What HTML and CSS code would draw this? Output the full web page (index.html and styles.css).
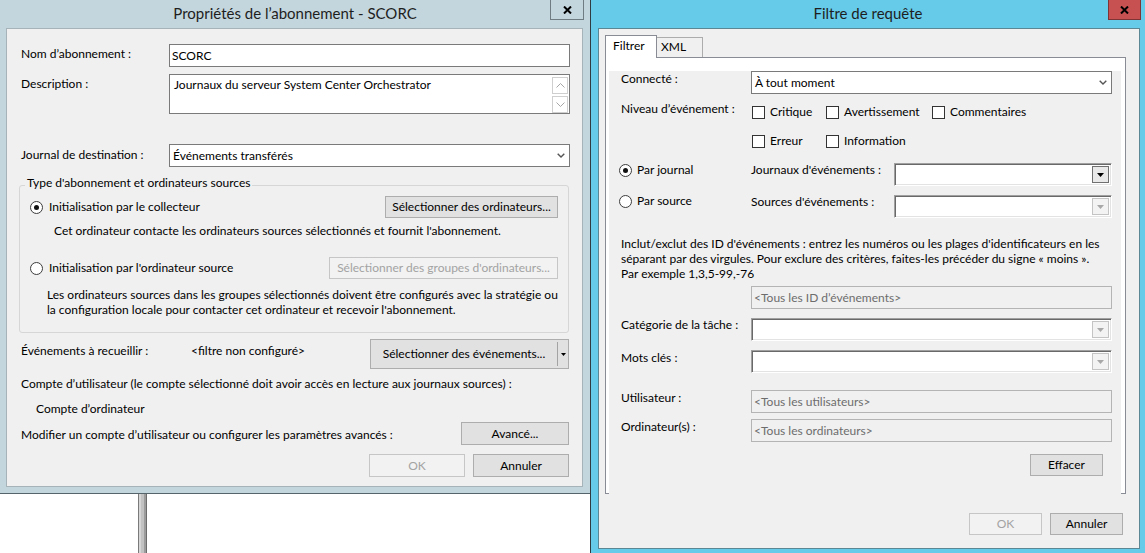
FILE: index.html
```html
<!DOCTYPE html>
<html lang="fr">
<head>
    <meta charset="UTF-8">
    <meta name="viewport" content="width=device-width, initial-scale=1.0">
    <title>Propriétés de l’abonnement - SCORC</title>
    <link rel="stylesheet" href="styles.css">
</head>
<body>
    <div class="desktop">
        <div class="left-side">
            <div class="window sub-window">
                <div class="titlebar">
                    <div class="title">Propriétés de l’abonnement - SCORC</div>
                    <div class="close-btn">
                        <svg width="9" height="8" viewBox="0 0 9 8"><path d="M1 0.5 L8 7.5 M8 0.5 L1 7.5" stroke="#000" stroke-width="2"/></svg>
                    </div>
                </div>
                <div class="client sub-client">
                    <div class="form-row row-name">
                        <div class="lbl">Nom d’abonnement :</div>
                        <div class="textbox">SCORC</div>
                    </div>
                    <div class="form-row row-desc">
                        <div class="lbl">Description :</div>
                        <div class="textbox textarea">
                            <span class="textarea-text">Journaux du serveur System Center Orchestrator</span>
                            <div class="scroll-btns">
                                <span class="scroll-btn"><svg width="9" height="5" viewBox="0 0 9 5"><path d="M0.5 4.5 L4.5 0.5 L8.5 4.5" fill="none" stroke="#a6a6a6"/></svg></span>
                                <span class="scroll-btn"><svg width="9" height="5" viewBox="0 0 9 5"><path d="M0.5 0.5 L4.5 4.5 L8.5 0.5" fill="none" stroke="#a6a6a6"/></svg></span>
                            </div>
                        </div>
                    </div>
                    <div class="form-row row-dest">
                        <div class="lbl">Journal de destination :</div>
                        <div class="select">
                            <span>Événements transférés</span>
                            <svg width="8" height="5" viewBox="0 0 8 5"><path d="M0.7 0.7 L4 4 L7.3 0.7" fill="none" stroke="#555" stroke-width="1.4"/></svg>
                        </div>
                    </div>

                    <fieldset class="group">
                        <legend>Type d'abonnement et ordinateurs sources</legend>
                        <div class="group-line line-a">
                            <span class="radio-item"><span class="radio checked"></span>Initialisation par le collecteur</span>
                            <button class="btn btn-computers">Sélectionner des ordinateurs...</button>
                        </div>
                        <div class="group-note">Cet ordinateur contacte les ordinateurs sources sélectionnés et fournit l'abonnement.</div>
                        <div class="group-line line-b">
                            <span class="radio-item"><span class="radio"></span>Initialisation par l'ordinateur source</span>
                            <button class="btn btn-disabled btn-groups">Sélectionner des groupes d'ordinateurs...</button>
                        </div>
                        <p class="group-para">Les ordinateurs sources dans les groupes sélectionnés doivent être configurés avec la stratégie ou<br>la configuration locale pour contacter cet ordinateur et recevoir l'abonnement.</p>
                    </fieldset>

                    <div class="row-events">
                        <div class="lbl">Événements à recueillir :</div>
                        <div class="filter-value">&lt;filtre non configuré&gt;</div>
                        <div class="split-btn">
                            <span class="split-main">Sélectionner des événements...</span>
                            <span class="split-arrow"><svg width="5" height="3" viewBox="0 0 5 3"><path d="M0 0 H5 L2.5 3 Z" fill="#000"/></svg></span>
                        </div>
                    </div>
                    <div class="acct-note">Compte d’utilisateur (le compte sélectionné doit avoir accès en lecture aux journaux sources) :</div>
                    <div class="acct-name">Compte d’ordinateur</div>
                    <div class="row-advanced">
                        <div class="lbl">Modifier un compte d’utilisateur ou configurer les paramètres avancés :</div>
                        <button class="btn btn-advanced">Avancé...</button>
                    </div>
                    <div class="dialog-buttons sub-buttons">
                        <button class="btn btn-disabled btn-dialog">OK</button>
                        <button class="btn btn-dialog">Annuler</button>
                    </div>
                </div>
            </div>
            <div class="backdrop"><div class="pole"></div></div>
        </div>

        <div class="window filter-window">
            <div class="titlebar">
                <div class="title">Filtre de requête</div>
                <div class="close-btn close-red">
                    <svg width="9" height="8" viewBox="0 0 9 8"><path d="M1 0.5 L8 7.5 M8 0.5 L1 7.5" stroke="#000" stroke-width="2"/></svg>
                </div>
            </div>
            <div class="client filter-client">
                <div class="tabs">
                    <div class="tab tab-active">Filtrer</div>
                    <div class="tab">XML</div>
                </div>
                <div class="tab-panel">
                    <div class="tab-page">
                        <div class="f-row f-connected">
                            <div class="f-label">Connecté :</div>
                            <div class="select">
                                <span>À tout moment</span>
                                <svg width="8" height="5" viewBox="0 0 8 5"><path d="M0.7 0.7 L4 4 L7.3 0.7" fill="none" stroke="#555" stroke-width="1.4"/></svg>
                            </div>
                        </div>
                        <div class="f-row f-level">
                            <div class="f-label f-label-level">Niveau d’événement :</div>
                            <div class="checks">
                                <span class="check-item"><span class="check"></span>Critique</span>
                                <span class="check-item"><span class="check"></span>Avertissement</span>
                                <span class="check-item"><span class="check"></span>Commentaires</span>
                                <span class="check-item"><span class="check"></span>Erreur</span>
                                <span class="check-item"><span class="check"></span>Information</span>
                            </div>
                        </div>
                        <div class="f-row f-log">
                            <span class="radio-item f-radio"><span class="radio checked"></span>Par journal</span>
                            <span class="f-sublabel">Journaux d'événements :</span>
                            <div class="combo">
                                <span class="combo-btn"><svg width="7" height="4" viewBox="0 0 7 4"><path d="M0 0 H7 L3.5 4 Z" fill="#000"/></svg></span>
                            </div>
                        </div>
                        <div class="f-row f-src">
                            <span class="radio-item f-radio"><span class="radio"></span>Par source</span>
                            <span class="f-sublabel">Sources d'événements :</span>
                            <div class="combo">
                                <span class="combo-btn combo-btn-off"><svg width="7" height="4" viewBox="0 0 7 4"><path d="M0 0 H7 L3.5 4 Z" fill="#a8a8a8"/></svg></span>
                            </div>
                        </div>
                        <p class="f-help">Inclut/exclut des ID d'événements : entrez les numéros ou les plages d'identificateurs en les<br>séparant par des virgules. Pour exclure des critères, faites-les précéder du signe « moins ».<br>Par exemple 1,3,5-99,-76</p>
                        <div class="textbox textbox-off f-ids">&lt;Tous les ID d’événements&gt;</div>
                        <div class="f-row f-task">
                            <div class="f-label">Catégorie de la tâche :</div>
                            <div class="combo">
                                <span class="combo-btn combo-btn-off"><svg width="7" height="4" viewBox="0 0 7 4"><path d="M0 0 H7 L3.5 4 Z" fill="#a8a8a8"/></svg></span>
                            </div>
                        </div>
                        <div class="f-row f-keywords">
                            <div class="f-label">Mots clés :</div>
                            <div class="combo">
                                <span class="combo-btn combo-btn-off"><svg width="7" height="4" viewBox="0 0 7 4"><path d="M0 0 H7 L3.5 4 Z" fill="#a8a8a8"/></svg></span>
                            </div>
                        </div>
                        <div class="f-row f-user">
                            <div class="f-label">Utilisateur :</div>
                            <div class="textbox textbox-off">&lt;Tous les utilisateurs&gt;</div>
                        </div>
                        <div class="f-row f-computer">
                            <div class="f-label">Ordinateur(s) :</div>
                            <div class="textbox textbox-off">&lt;Tous les ordinateurs&gt;</div>
                        </div>
                        <div class="f-actions">
                            <button class="btn btn-clear">Effacer</button>
                        </div>
                    </div>
                </div>
                <div class="dialog-buttons filter-buttons">
                    <button class="btn btn-disabled btn-small">OK</button>
                    <button class="btn btn-small">Annuler</button>
                </div>
            </div>
        </div>
    </div>
</body>
</html>
```

FILE: styles.css
```css
* {
    box-sizing: border-box;
}
html, body {
    margin: 0;
    padding: 0;
}
body {
    width: 1145px;
    height: 553px;
    overflow: hidden;
    background: #fff;
    font-family: "Segoe UI", Lato, "Noto Sans", sans-serif;
    font-size: 12px;
    line-height: 16px;
    color: #000;
}
p {
    margin: 0;
}
.desktop {
    display: flex;
    align-items: flex-start;
    height: 553px;
}

/* window chrome */
.window {
    display: flex;
    flex-direction: column;
    flex: none;
}
.titlebar {
    height: 28px;
    flex: none;
    display: grid;
    grid-template-columns: 1fr auto 1fr;
}
.title {
    grid-column: 2;
    font-size: 15px;
    line-height: 27px;
    color: #1e1e1e;
    white-space: nowrap;
}
.close-btn {
    grid-column: 3;
    justify-self: end;
    width: 34px;
    height: 20px;
    margin-right: 6px;
    border: 1px solid #6f7d83;
    border-top: none;
    display: flex;
    align-items: center;
    justify-content: center;
}
.close-red {
    width: 33px;
    margin-right: 4px;
    background: #c75050;
    border-color: #7e3434;
}
.client {
    background: #f0f0f0;
    flex: none;
}

/* left dialog */
.left-side {
    width: 590px;
    height: 553px;
    display: flex;
    flex-direction: column;
}
.sub-window {
    width: 590px;
    height: 494px;
    background: #c3d6dd;
    border-bottom: 1px solid #55646a;
}
.sub-client {
    margin: 0 7px 0 6px;
    height: 459px;
    padding: 0 12px 0 14px;
    border: 1px solid #a6b4ba;
}
.backdrop {
    flex: 1;
    background: #fff;
}
.pole {
    margin-left: 138px;
    width: 9px;
    height: 100%;
    background: linear-gradient(90deg, #7a7a7a 0 1px, #d6d6d6 1px 3px, #c2c2c2 3px 6px, #9c9c9c 6px 8px, #6c6c6c 8px);
}

.form-row {
    display: flex;
    align-items: flex-start;
}
.form-row .lbl {
    width: 148px;
    flex: none;
    margin-top: 2px;
}
.row-name {
    margin-top: 15px;
}
.row-desc {
    margin-top: 7px;
}
.row-dest {
    margin-top: 30px;
}
.row-dest .lbl {
    margin-top: 3px;
}

.textbox {
    flex: 1;
    height: 23px;
    border: 1px solid #7a7a7a;
    background: #fff;
    padding: 0 2px;
    line-height: 21px;
    white-space: nowrap;
}
.textarea {
    height: 40px;
    display: flex;
    justify-content: space-between;
    padding: 1px 1px 0 4px;
    line-height: 16px;
}
.textarea-text {
    margin-top: 1px;
}
.scroll-btns {
    display: flex;
    flex-direction: column;
    gap: 2px;
    margin-top: 1px;
}
.scroll-btn {
    width: 16px;
    height: 17px;
    border: 1px solid #cfcfcf;
    display: flex;
    align-items: center;
    justify-content: center;
}
.select {
    flex: 1;
    height: 23px;
    border: 1px solid #7a7a7a;
    background: #fff;
    display: flex;
    align-items: center;
    justify-content: space-between;
    padding: 0 4px 0 3px;
}

/* group box */
.group {
    margin: 8px 1px 0 -2px;
    padding: 0 10px 15px 5px;
    border: 1px solid #d6d6d6;
    border-radius: 3px;
    min-width: 0;
}
.group legend {
    padding: 0 2px 4px;
    line-height: 16px;
}
.group-line {
    display: flex;
    align-items: center;
    justify-content: space-between;
    height: 22px;
    padding-left: 5px;
}
.line-a {
    margin-top: 1px;
}
.line-b {
    margin-top: 18px;
}
.group-note {
    margin: 5px 0 0 29px;
}
.group-para {
    margin: 8px 0 0 22px;
    line-height: 15px;
    white-space: nowrap;
}

.radio-item {
    display: flex;
    align-items: center;
    gap: 6px;
    white-space: nowrap;
}
.radio {
    width: 13px;
    height: 13px;
    flex: none;
    border: 1px solid #3c3c3c;
    border-radius: 50%;
    background: #fff;
    display: flex;
    align-items: center;
    justify-content: center;
}
.radio.checked::after {
    content: "";
    width: 5px;
    height: 5px;
    border-radius: 50%;
    background: #111;
}

/* buttons */
.btn {
    font: inherit;
    color: #000;
    background: #e1e1e1;
    border: 1px solid #adadad;
    padding: 0;
    height: 22px;
    line-height: 20px;
    text-align: center;
    white-space: nowrap;
}
.btn-disabled {
    background: #f2f2f2;
    border-color: #c6c6c6;
    color: #a3a3a3;
}
.btn-computers {
    width: 173px;
}
.btn-groups {
    width: 229px;
}
.btn-advanced {
    width: 108px;
    height: 23px;
}
.btn-dialog {
    width: 96px;
    height: 23px;
}
.btn-small {
    width: 73px;
}
.btn-clear {
    width: 73px;
}

.row-events {
    margin-top: 6px;
    display: flex;
    align-items: flex-start;
    padding-right: 1px;
}
.row-events .lbl {
    width: 170px;
    flex: none;
    margin-top: 4px;
}
.filter-value {
    margin-top: 4px;
}
.split-btn {
    margin-left: auto;
    width: 199px;
    height: 30px;
    display: flex;
    background: #e1e1e1;
    border: 1px solid #adadad;
}
.split-main {
    flex: 1;
    display: flex;
    align-items: center;
    justify-content: center;
}
.split-arrow {
    width: 11px;
    margin: 2px 0;
    border-left: 1px solid #a3a3a3;
    display: flex;
    align-items: center;
    justify-content: center;
}
.acct-note {
    margin-top: 7px;
}
.acct-name {
    margin: 9px 0 0 15px;
}
.row-advanced {
    margin-top: 5px;
    display: flex;
    justify-content: space-between;
    align-items: flex-start;
    padding-right: 1px;
}
.row-advanced .lbl {
    margin-top: 5px;
}
.dialog-buttons {
    display: flex;
    justify-content: flex-end;
    gap: 8px;
}
.sub-buttons {
    margin-top: 9px;
    padding-right: 1px;
}

/* right dialog */
.filter-window {
    width: 555px;
    height: 553px;
    background: #65cbe9;
    border-left: 1px solid #2f3b40;
}
.filter-client {
    margin: 0 5px 0 7px;
    height: 521px;
    padding: 6px 13px 0 6px;
    border: 1px solid #5b8794;
}
.tabs {
    display: flex;
    align-items: flex-end;
    height: 22px;
}
.tab {
    height: 20px;
    width: 47px;
    margin-left: -1px;
    padding-left: 4px;
    line-height: 18px;
    border: 1px solid #acacac;
    border-bottom: none;
    background: #f0f0f0;
}
.tab-active {
    height: 23px;
    width: 52px;
    margin: 0 0 -1px 0;
    padding-left: 7px;
    line-height: 20px;
    background: #fff;
    border-color: #898c95;
    position: relative;
    z-index: 1;
}
.tab-panel {
    height: 437px;
    border: 1px solid #898c95;
    background: #fff;
    padding: 1px 4px 3px 3px;
}
.tab-page {
    height: 100%;
    background: #f0f0f0;
    padding: 0 9px 0 12px;
}
.f-row {
    display: flex;
    align-items: flex-start;
}
.f-label {
    width: 130px;
    flex: none;
    white-space: nowrap;
}
.f-connected {
    margin-top: 12px;
}
.f-level {
    margin-top: 10px;
}
.f-label-level {
    margin-top: -3px;
}
.checks {
    display: grid;
    grid-template-columns: 74px 106px auto;
    row-gap: 13px;
}
.check-item {
    display: flex;
    align-items: center;
    gap: 5px;
    white-space: nowrap;
}
.check {
    width: 13px;
    height: 13px;
    flex: none;
    margin-left: 1px;
    border: 1px solid #333;
    background: #fff;
}
.f-log {
    margin-top: 14px;
}
.f-src {
    margin-top: 9px;
}
.f-radio {
    width: 132px;
    flex: none;
    margin: -1px 0 0 -2px;
    gap: 5px;
}
.f-src .f-radio {
    margin-top: -2px;
}
.f-sublabel {
    width: 143px;
    flex: none;
    margin-top: -1px;
    white-space: nowrap;
}
.combo {
    flex: 1;
    height: 23px;
    background: #fff;
    border: 1px solid;
    border-color: #a0a0a0 #fff #fff #a0a0a0;
    box-shadow: inset 1px 1px 0 #696969, inset -1px -1px 0 #e3e3e3;
    display: flex;
    justify-content: flex-end;
    align-items: center;
    padding-right: 2px;
}
.combo-btn {
    width: 17px;
    height: 17px;
    border: 1px solid #707070;
    background: #e9e9e9;
    display: flex;
    align-items: center;
    justify-content: center;
}
.combo-btn-off {
    border-color: #c4c4c4;
    background: #f3f3f3;
}
.f-help {
    margin-top: 18px;
    line-height: 15px;
    white-space: nowrap;
}
.textbox-off {
    background: #f0f0f0;
    border-color: #b4b4b4;
    color: #6d6d6d;
}
.f-ids {
    margin: 5px 0 0 130px;
}
.f-task {
    margin-top: 9px;
}
.f-task .f-label {
    margin-top: -1px;
}
.f-keywords {
    margin-top: 9px;
}
.f-user {
    margin-top: 17px;
}
.f-computer {
    margin-top: 6px;
}
.f-actions {
    margin-top: 12px;
    display: flex;
    justify-content: flex-end;
    padding-right: 9px;
}
.filter-buttons {
    margin-top: 19px;
    padding-right: 3px;
}
```
